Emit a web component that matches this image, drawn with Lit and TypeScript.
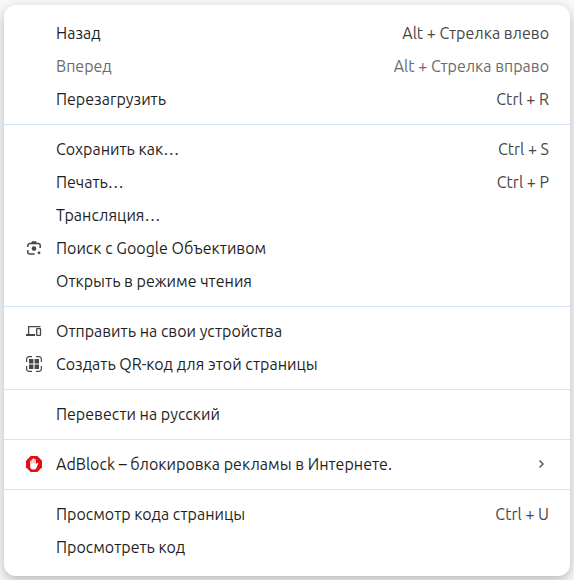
import { LitElement, html, css, svg, nothing } from "lit";
import { customElement, property } from "lit/decorators.js";

interface MenuEntry {
  label: string;
  shortcut?: string;
  icon?: string;
  disabled?: boolean;
  submenu?: boolean;
}

const icons: Record<string, unknown> = {
  lens: svg`
    <g fill="none" stroke="#474747" stroke-width="1.5">
      <path d="M1.8 7V5.6A2 2 0 0 1 3.8 3.6H12.2A2 2 0 0 1 14.2 5.6V8"/>
      <path d="M1.8 10V12A2 2 0 0 0 3.8 14H8.6"/>
    </g>
    <path d="M4.8 3.8L6 1.2H10L11.2 3.8Z" fill="#474747"/>
    <circle cx="8" cy="8.6" r="2.3" fill="#474747"/>
    <circle cx="13" cy="12.8" r="1.4" fill="#474747"/>`,
  devices: svg`
    <path d="M2.6 11V3.6H14.5" fill="none" stroke="#474747" stroke-width="1.3"/>
    <path d="M0 11H9V13H0Z" fill="#474747"/>
    <rect x="10.7" y="5.7" width="3.8" height="6.6" rx="0.4" fill="none" stroke="#474747" stroke-width="1.3"/>`,
  qr: svg`
    <path d="M0.6 6V3A2.4 2.4 0 0 1 3 0.6H6M10 0.6H13A2.4 2.4 0 0 1 15.4 3V6M15.4 10V13A2.4 2.4 0 0 1 13 15.4H10M6 15.4H3A2.4 2.4 0 0 1 0.6 13V10" fill="none" stroke="#474747" stroke-width="1.2"/>
    <path d="M3 3H7.4V7.4H3ZM8.6 3H13V7.4H8.6ZM3 8.6H7.4V13H3ZM8.6 8.6H13V13H8.6Z" fill="#474747"/>`,
  adblock: svg`
    <path d="M4.7 0H11.3L16 4.7V11.3L11.3 16H4.7L0 11.3V4.7Z" fill="#e40d13"/>
    <path d="M4.2 5Q4.9 4.2 5.6 5V3.4Q6.2 2.6 6.9 3.4V2.7Q7.6 1.9 8.3 2.7V3.3Q9.1 2.6 9.8 3.4V8.4L10.9 7.1Q12 6.6 12.3 7.5L10.4 12Q9.7 13.6 8 13.6H7Q4.2 13.2 4.2 10.4Z" fill="#fff"/>
    <path d="M5.7 5V7.6M7 3.6V7.4M8.4 3.6V7.4" stroke="#e40d13" stroke-width="0.3"/>`,
};

const groups: MenuEntry[][] = [
  [
    { label: "Назад", shortcut: "Alt + Стрелка влево" },
    { label: "Вперед", shortcut: "Alt + Стрелка вправо", disabled: true },
    { label: "Перезагрузить", shortcut: "Ctrl + R" },
  ],
  [
    { label: "Сохранить как…", shortcut: "Ctrl + S" },
    { label: "Печать…", shortcut: "Ctrl + P" },
    { label: "Трансляция…" },
    { label: "Поиск с Google Объективом", icon: "lens" },
    { label: "Открыть в режиме чтения" },
  ],
  [
    { label: "Отправить на свои устройства", icon: "devices" },
    { label: "Создать QR-код для этой страницы", icon: "qr" },
  ],
  [{ label: "Перевести на русский" }],
  [{ label: "AdBlock – блокировка рекламы в Интернете.", icon: "adblock", submenu: true }],
  [
    { label: "Просмотр кода страницы", shortcut: "Ctrl + U" },
    { label: "Просмотреть код" },
  ],
];

@customElement("menu-row")
export class MenuRow extends LitElement {
  @property({ attribute: false }) entry!: MenuEntry;

  static styles = css`
    :host {
      display: block;
    }
    .row {
      display: flex;
      align-items: center;
      box-sizing: border-box;
      width: 100%;
      height: 33px;
      margin: 0;
      padding: 0 21px 1px 22px;
      border: 0;
      background: none;
      color: #1f1f1f;
      font: inherit;
      text-align: left;
      white-space: nowrap;
    }
    .row:hover:enabled {
      background: #f0f1f4;
    }
    .icon {
      flex: none;
      width: 16px;
      height: 16px;
      margin-right: 14px;
    }
    .label {
      flex: 1;
    }
    .shortcut {
      color: #474747;
    }
    .row:disabled,
    .row:disabled .shortcut {
      color: #6b6b6b;
    }
    .arrow {
      flex: none;
      width: 16px;
      height: 16px;
    }
  `;

  render() {
    const { label, shortcut, icon, disabled, submenu } = this.entry;
    return html`<button
      class="row"
      type="button"
      role="menuitem"
      ?disabled=${disabled}
      aria-haspopup=${submenu ? "menu" : nothing}
    >
      <svg class="icon" viewBox="0 0 16 16" aria-hidden="true">${icon ? icons[icon] : nothing}</svg>
      <span class="label">${label}</span>
      ${shortcut ? html`<span class="shortcut">${shortcut}</span>` : nothing}
      ${submenu
        ? html`<svg class="arrow" viewBox="0 0 16 16" aria-hidden="true">
            <path d="M6.5 4.5L10 8L6.5 11.5" fill="none" stroke="#5a5a5a" stroke-width="1.5" />
          </svg>`
        : nothing}
    </button>`;
  }
}

@customElement("app-root")
export class AppRoot extends LitElement {
  static styles = css`
    :host {
      display: block;
      box-sizing: border-box;
      min-height: 100vh;
      padding: 5px 4px 4px;
      overflow: hidden;
      background: #f8f8fb;
      font: 16px/20px Ubuntu, "Noto Sans", sans-serif;
    }
    .menu {
      padding: 12px 0;
      border-radius: 12px;
      background: #fff;
      box-shadow: 0 4px 12px rgba(0, 0, 0, 0.26);
    }
    .separator {
      height: 1px;
      margin: 8px 0;
      border: 0;
      background: #d3e3fd;
    }
  `;

  render() {
    return html`<div class="menu" role="menu">
      ${groups.map(
        (group, i) => html`${i ? html`<hr class="separator" />` : nothing}
          ${group.map((entry) => html`<menu-row .entry=${entry}></menu-row>`)}`,
      )}
    </div>`;
  }
}
